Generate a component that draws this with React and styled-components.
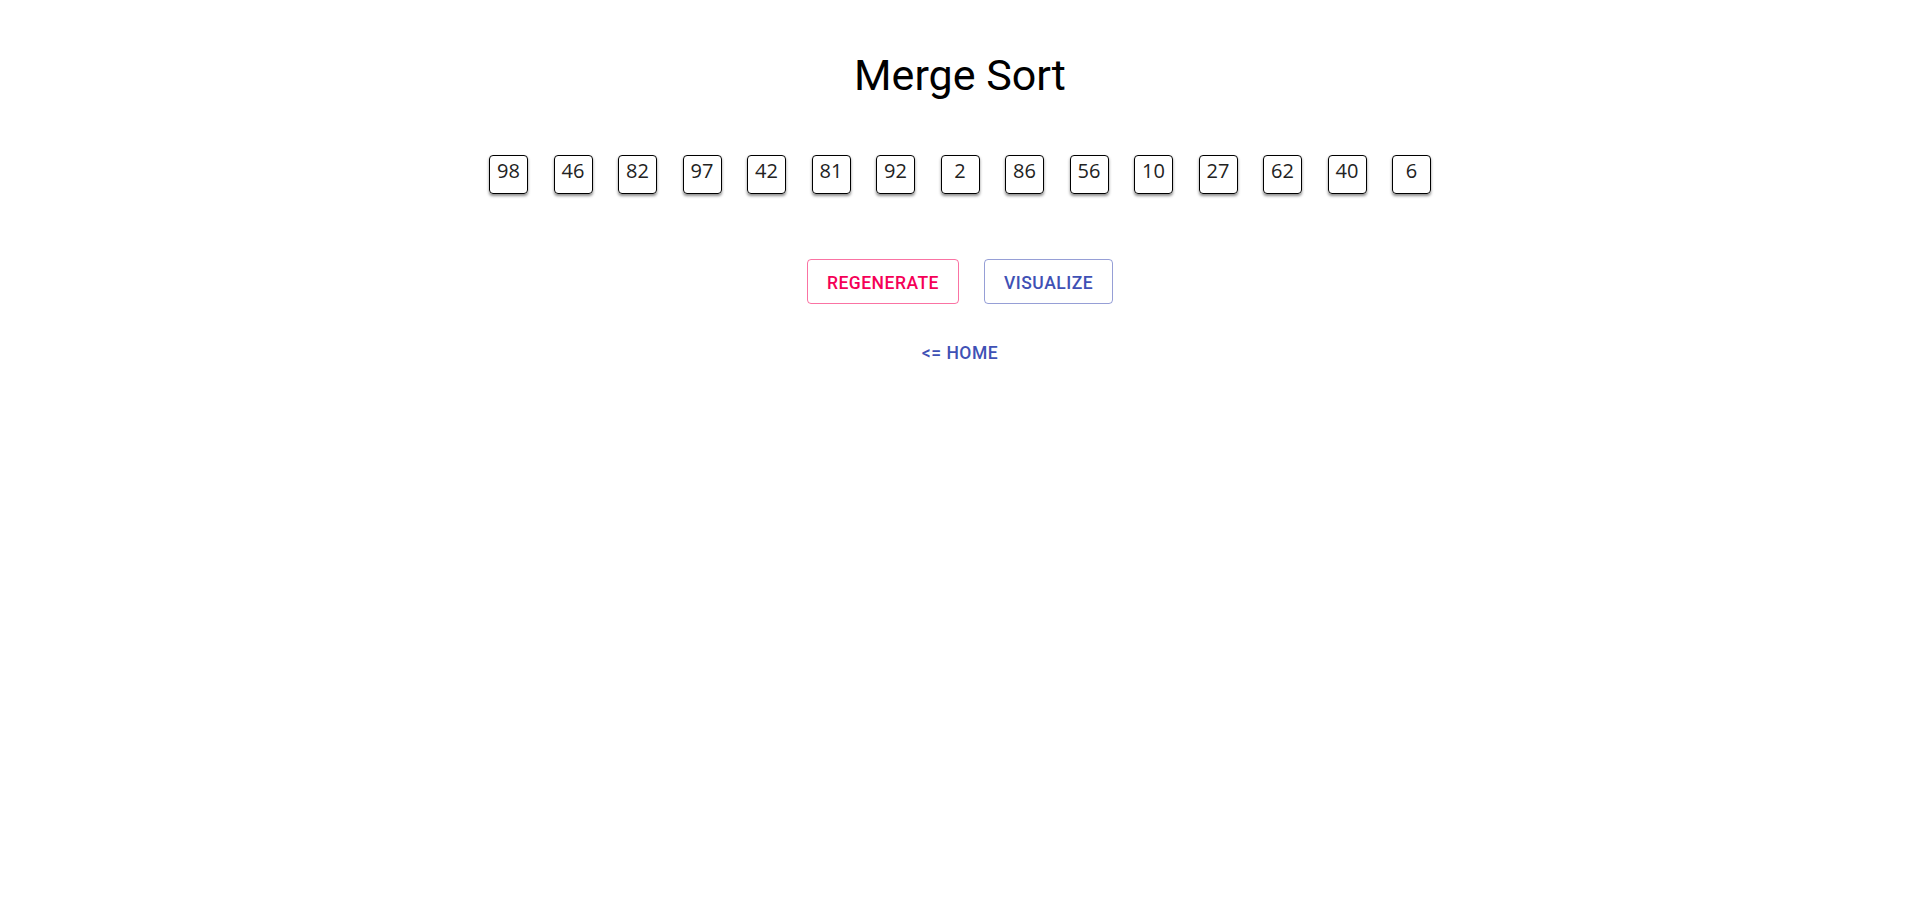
import React from "react";
import styled, { createGlobalStyle } from "styled-components";

const Global = createGlobalStyle`
  html, body { margin: 0; padding: 0; background: #fff; }
  body { font-family: Roboto, "Liberation Sans", sans-serif; }
`;

const Page = styled.div`
  display: flex;
  flex-direction: column;
  align-items: center;
  padding-top: 50px;
`;

const Title = styled.h1`
  margin: 0;
  font-family: Roboto, "Liberation Sans", sans-serif;
  font-weight: 400;
  font-size: 43px;
  line-height: 50px;
  color: #000;
`;

const Row = styled.div`
  display: flex;
  justify-content: center;
  gap: 25.5px;
  margin-top: 55px;
`;

const Cell = styled.div`
  box-sizing: border-box;
  width: 39px;
  height: 39px;
  border: 1px solid #000;
  border-radius: 4px;
  box-shadow: 0 2px 3px rgba(0, 0, 0, 0.45);
  padding-top: 1px;
  text-align: center;
  font-family: "Open Sans", "Noto Sans", sans-serif;
  font-size: 20px;
  line-height: 27px;
  color: #222;
`;

const Buttons = styled.div`
  display: flex;
  gap: 25px;
  margin-top: 65px;
`;

const OutlineButton = styled.button`
  box-sizing: border-box;
  height: 45px;
  padding: 2px 19px 0;
  background: transparent;
  border: 1px solid ${(p) => p.$border};
  border-radius: 4px;
  color: ${(p) => p.$color};
  font-family: Roboto, "Liberation Sans", sans-serif;
  font-weight: 500;
  font-size: 17.5px;
  letter-spacing: 0.5px;
  text-transform: uppercase;
  cursor: pointer;
`;

const HomeLink = styled.button`
  margin-top: 29px;
  padding: 6px 8px;
  background: transparent;
  border: none;
  color: #3f51b5;
  font-family: Roboto, "Liberation Sans", sans-serif;
  font-weight: 500;
  font-size: 17.5px;
  line-height: 29px;
  letter-spacing: 0.5px;
  cursor: pointer;
`;

const values = [98, 46, 82, 97, 42, 81, 92, 2, 86, 56, 10, 27, 62, 40, 6];

export default function App() {
  return (
    <>
      <Global />
      <Page>
        <Title>Merge Sort</Title>
        <Row>
          {values.map((v, i) => (
            <Cell key={i}>{v}</Cell>
          ))}
        </Row>
        <Buttons>
          <OutlineButton $color="#f50057" $border="rgba(245,0,87,0.55)">
            Regenerate
          </OutlineButton>
          <OutlineButton $color="#3f51b5" $border="rgba(63,81,181,0.55)">
            Visualize
          </OutlineButton>
        </Buttons>
        <HomeLink>{"<= HOME"}</HomeLink>
      </Page>
    </>
  );
}
